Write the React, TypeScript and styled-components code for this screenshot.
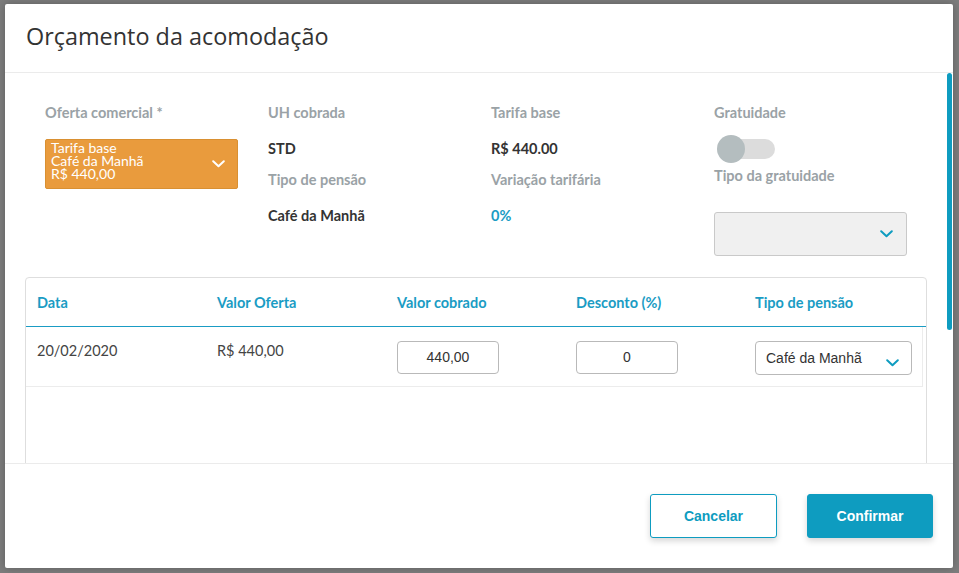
import styled, { createGlobalStyle } from "styled-components";

const GlobalStyle = createGlobalStyle`
  html, body {
    margin: 0;
    padding: 0;
    height: 100%;
  }
  body {
    background: #7d7d7d;
    font-family: Lato, "Open Sans", sans-serif;
  }
  * {
    box-sizing: border-box;
  }
`;

const BLUE = "#0e9cc0";

const Backdrop = styled.div`
  height: 100vh;
  display: flex;
  padding: 4px 6px 5px 5px;
  background: #7d7d7d;
`;

const Modal = styled.div`
  flex: 1;
  display: flex;
  flex-direction: column;
  background: #fff;
  border-radius: 2px;
  box-shadow: 0 0 8px rgba(0, 0, 0, 0.25);
  overflow: hidden;
`;

const Header = styled.div`
  height: 69px;
  flex-shrink: 0;
  display: flex;
  align-items: center;
  padding: 0 0 4px 21px;
  border-bottom: 1px solid #ebebeb;
`;

const Title = styled.h1`
  margin: 0;
  font-family: "Open Sans", sans-serif;
  font-size: 23.4px;
  font-weight: 400;
  color: #333;
`;

const BodyWrap = styled.div`
  position: relative;
  flex: 1;
  overflow: hidden;
`;

const Body = styled.div`
  height: 100%;
  overflow: hidden;
  padding: 30px 0 29px 20px;
`;

const ScrollThumb = styled.div`
  position: absolute;
  top: 0;
  right: 1px;
  width: 5px;
  height: 257px;
  border-radius: 3px;
  background: ${BLUE};
`;

const Fields = styled.div`
  display: grid;
  grid-template-columns: repeat(4, 223px);
  margin-left: 20px;
`;

const Column = styled.div`
  display: flex;
  flex-direction: column;
  align-items: flex-start;
`;

const Label = styled.div<{ $gap?: number }>`
  height: 20px;
  line-height: 20px;
  font-size: 14.5px;
  font-weight: 700;
  color: #9aa2a6;
  margin-top: ${(p) => p.$gap ?? 0}px;
`;

const Value = styled.div<{ $accent?: boolean }>`
  height: 20px;
  line-height: 20px;
  margin-top: 16px;
  font-size: 14.5px;
  font-weight: 700;
  color: ${(p) => (p.$accent ? "#1a9cc4" : "#333")};
`;

const OfferSelect = styled.div`
  margin-top: 16px;
  width: 193px;
  height: 50px;
  background: #e99b3d;
  border: 1px solid #d99032;
  border-radius: 2px;
  display: flex;
  align-items: center;
  justify-content: space-between;
  padding: 0 12px 0 5px;
  color: #fff;
`;

const OfferLines = styled.div`
  align-self: flex-start;
  padding-top: 1px;
  font-size: 14px;
  line-height: 13px;
  font-weight: 400;
`;

const Toggle = styled.div`
  position: relative;
  margin: 12px 0 0 3px;
  width: 58px;
  height: 28px;
  display: flex;
  align-items: center;
`;

const Track = styled.div`
  margin-left: 4px;
  width: 54px;
  height: 20px;
  border-radius: 10px;
  background: #dcdcdc;
`;

const Knob = styled.div`
  position: absolute;
  left: 0;
  top: 0;
  width: 28px;
  height: 28px;
  border-radius: 50%;
  background: #b4bdbf;
`;

const GrayDropdown = styled.div`
  margin-top: 26px;
  width: 193px;
  height: 44px;
  background: #f0f0f0;
  border: 1px solid #c9c9c9;
  border-radius: 3px;
  display: flex;
  align-items: center;
  justify-content: flex-end;
  padding-right: 13px;
`;

const Card = styled.div`
  margin-top: 21px;
  width: 902px;
  height: 360px;
  border: 1px solid #dedede;
  border-radius: 4px;
`;

const Row = styled.div<{ $head?: boolean }>`
  display: grid;
  grid-template-columns: 180px 180px 179px 179px 1fr;
  height: ${(p) => (p.$head ? 49 : 60)}px;
  border-bottom: 1px solid ${(p) => (p.$head ? "#1a9cc4" : "#ececec")};
  margin-right: ${(p) => (p.$head ? 0 : 3)}px;
  border-right: ${(p) => (p.$head ? "none" : "1px solid #ececec")};
`;

const HeadCell = styled.div`
  display: flex;
  align-items: center;
  padding: 1px 11px 0;
  font-size: 14.5px;
  font-weight: 700;
  color: #1a9cc4;
`;

const Cell = styled.div`
  padding: 14px 11px 0;
  font-size: 14.5px;
  line-height: 20px;
  color: #444;
`;

const NumberInput = styled.input`
  width: 102px;
  height: 33px;
  border: 1px solid #b9b9b9;
  border-radius: 4px;
  text-align: center;
  font-family: "Liberation Sans", Arial, sans-serif;
  font-size: 14px;
  color: #333;
  background: #fff;
  padding: 0 0 2px;
  outline: none;
`;

const PlainSelect = styled.div`
  width: 157px;
  height: 34px;
  border: 1px solid #b9b9b9;
  border-radius: 4px;
  background: #fff;
  display: flex;
  align-items: center;
  justify-content: space-between;
  padding: 0 12px 0 10px;
  font-family: "Liberation Sans", Arial, sans-serif;
  font-size: 14px;
  color: #333;

  svg {
    margin-top: 10px;
  }
`;

const Footer = styled.div`
  flex-shrink: 0;
  display: flex;
  justify-content: flex-end;
  gap: 30px;
  padding: 30px 20px 30px;
  border-top: 1px solid #ebebeb;
`;

const Button = styled.button<{ $primary?: boolean }>`
  width: ${(p) => (p.$primary ? 126 : 127)}px;
  height: 44px;
  border-radius: 3px;
  border: 1px solid ${BLUE};
  background: ${(p) => (p.$primary ? BLUE : "#fff")};
  color: ${(p) => (p.$primary ? "#fff" : BLUE)};
  font-family: "Liberation Sans", Arial, sans-serif;
  font-size: 14px;
  font-weight: 700;
  box-shadow: 0 3px 6px rgba(0, 0, 0, 0.16);
  cursor: pointer;
`;

const Chevron = ({ color }: { color: string }) => (
  <svg width="13" height="8" viewBox="0 0 13 8">
    <polyline
      points="1.2,1.2 6.5,6.3 11.8,1.2"
      fill="none"
      stroke={color}
      strokeWidth="2"
      strokeLinecap="round"
      strokeLinejoin="round"
    />
  </svg>
);

const headers = ["Data", "Valor Oferta", "Valor cobrado", "Desconto (%)", "Tipo de pensão"];

export default function App() {
  return (
    <>
      <GlobalStyle />
      <Backdrop>
        <Modal>
          <Header>
            <Title>Orçamento da acomodação</Title>
          </Header>
          <BodyWrap>
            <Body>
              <Fields>
                <Column>
                  <Label>Oferta comercial *</Label>
                  <OfferSelect>
                    <OfferLines>
                      Tarifa base
                      <br />
                      Café da Manhã
                      <br />
                      R$ 440,00
                    </OfferLines>
                    <Chevron color="#fff" />
                  </OfferSelect>
                </Column>
                <Column>
                  <Label>UH cobrada</Label>
                  <Value>STD</Value>
                  <Label $gap={11}>Tipo de pensão</Label>
                  <Value>Café da Manhã</Value>
                </Column>
                <Column>
                  <Label>Tarifa base</Label>
                  <Value>R$ 440.00</Value>
                  <Label $gap={11}>Variação tarifária</Label>
                  <Value $accent>0%</Value>
                </Column>
                <Column>
                  <Label>Gratuidade</Label>
                  <Toggle>
                    <Track />
                    <Knob />
                  </Toggle>
                  <Label $gap={3}>Tipo da gratuidade</Label>
                  <GrayDropdown>
                    <Chevron color={BLUE} />
                  </GrayDropdown>
                </Column>
              </Fields>

              <Card>
                <Row $head>
                  {headers.map((h) => (
                    <HeadCell key={h}>{h}</HeadCell>
                  ))}
                </Row>
                <Row>
                  <Cell>20/02/2020</Cell>
                  <Cell>R$ 440,00</Cell>
                  <Cell>
                    <NumberInput defaultValue="440,00" />
                  </Cell>
                  <Cell>
                    <NumberInput defaultValue="0" />
                  </Cell>
                  <Cell>
                    <PlainSelect>
                      Café da Manhã
                      <Chevron color={BLUE} />
                    </PlainSelect>
                  </Cell>
                </Row>
              </Card>
            </Body>
            <ScrollThumb />
          </BodyWrap>
          <Footer>
            <Button>Cancelar</Button>
            <Button $primary>Confirmar</Button>
          </Footer>
        </Modal>
      </Backdrop>
    </>
  );
}
